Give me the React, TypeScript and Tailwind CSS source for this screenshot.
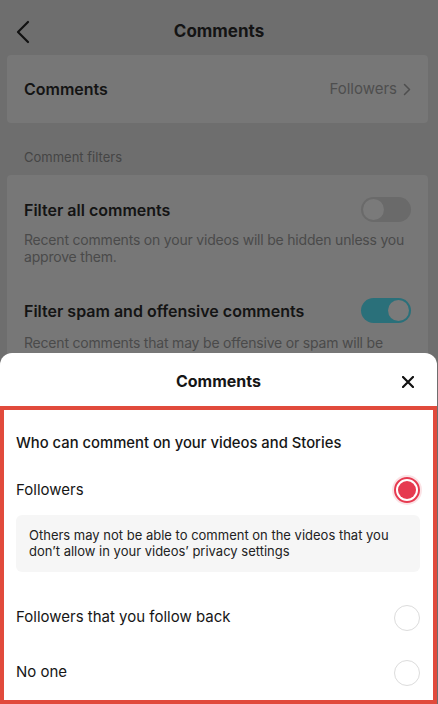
import React, { useState } from 'react';

const font = { fontFamily: 'Inter, "Liberation Sans", sans-serif' };

const Toggle: React.FC<{ on: boolean }> = ({ on }) => (
  <div
    className={`w-[50px] h-[25px] rounded-full p-[2px] flex items-center shrink-0 ${
      on ? 'bg-[#2a707a] justify-end' : 'bg-[#6a6a6a] justify-start'
    }`}
  >
    <div className="w-[21px] h-[21px] rounded-full bg-[#7a7a7a]" />
  </div>
);

const Radio: React.FC<{ checked: boolean }> = ({ checked }) =>
  checked ? (
    <div className="w-[26px] h-[26px] rounded-full border-2 border-[#e63a50] p-[2px] shadow-[0_0_0_2px_rgba(230,58,80,0.15)]">
      <div className="w-full h-full rounded-full bg-[#e63a50]" />
    </div>
  ) : (
    <div className="w-[26px] h-[26px] rounded-full border-[1.5px] border-[#dcdcdc]" />
  );

const App: React.FC = () => {
  const [choice, setChoice] = useState('followers');

  return (
    <div className="relative w-[438px] h-[704px] overflow-hidden bg-[#6e6e6e]" style={font}>
      {/* Dimmed settings page */}
      <div className="flex flex-col">
        <div className="relative h-[55px] flex justify-center pt-[20px]">
          <svg className="absolute left-[15px] top-[20px]" width="16" height="24" viewBox="0 0 16 24" fill="none">
            <path d="M13 2L3 12l10 10" stroke="#111" strokeWidth="2.2" strokeLinecap="round" strokeLinejoin="round" />
          </svg>
          <span className="text-[17px] leading-[22px] font-bold text-[#141414]">Comments</span>
        </div>

        <div className="ml-[7px] mr-[10px] h-[68px] rounded-[4px] bg-[#777777] flex items-center justify-between pl-[17px] pr-[17px]">
          <span className="text-[16px] font-semibold text-[#141414]">Comments</span>
          <div className="flex items-center gap-[6px] text-[#4e4e4e]">
            <span className="text-[15px]">Followers</span>
            <svg width="8" height="13" viewBox="0 0 8 13" fill="none">
              <path d="M1.5 1.5l5 5-5 5" stroke="#4e4e4e" strokeWidth="1.5" strokeLinecap="round" strokeLinejoin="round" />
            </svg>
          </div>
        </div>

        <div className="pl-[24px] pt-[25px] pb-[9px] text-[13px] leading-[18px] text-[#454545]">Comment filters</div>

        <div className="ml-[7px] mr-[10px] rounded-[4px] bg-[#777777] pl-[17px] pr-[12px] pt-[22px] pb-[20px]">
          <div className="flex items-center justify-between h-[25px] pr-[5px]">
            <span className="text-[16px] font-semibold text-[#141414]">Filter all comments</span>
            <Toggle on={false} />
          </div>
          <p className="mt-[9px] text-[14px] leading-[17px] tracking-[-0.2px] text-[#4a4a4a]">
            Recent comments on your videos will be hidden unless you approve them.
          </p>
          <div className="mt-[33px] flex items-center justify-between h-[25px] pr-[5px]">
            <span className="text-[16px] font-semibold text-[#141414]">Filter spam and offensive comments</span>
            <Toggle on={true} />
          </div>
          <p className="mt-[11px] text-[14px] leading-[17px] tracking-[-0.2px] text-[#4a4a4a]">
            Recent comments that may be offensive or spam will be hidden.
          </p>
        </div>
      </div>

      {/* Bottom sheet */}
      <div className="absolute left-0 top-[353px] w-[437px] h-[351px] bg-white rounded-t-[12px] flex flex-col">
        <div className="relative h-[53px] flex items-center justify-center shrink-0">
          <span className="text-[16px] font-bold text-[#161616] mt-[2px]">Comments</span>
          <svg className="absolute right-[23px] top-[23px]" width="12" height="12" viewBox="0 0 12 12" fill="none">
            <path d="M1 1l10 10M11 1L1 11" stroke="#111" strokeWidth="2.2" strokeLinecap="round" />
          </svg>
        </div>

        <div className="flex-1 border-4 border-[#e14a3c] pl-[12px] pr-[13px] pt-[23px] overflow-hidden">
          <div className="text-[14.8px] leading-[20px] font-medium text-[#161616]">
            Who can comment on your videos and Stories
          </div>

          <button
            onClick={() => setChoice('followers')}
            className="mt-[17px] w-full h-[40px] flex items-center justify-between"
          >
            <span className="text-[15px] text-[#161616]">Followers</span>
            <Radio checked={choice === 'followers'} />
          </button>

          <div className="mt-[5px] rounded-[6px] bg-[#f6f6f6] pl-[13px] pr-[10px] pt-[12px] pb-[13px] text-[13px] leading-[16px] text-[#222]">
            Others may not be able to comment on the videos that you don’t allow in your videos’ privacy settings
          </div>

          <button
            onClick={() => setChoice('mutual')}
            className="mt-[18px] w-full h-[55px] flex items-center justify-between"
          >
            <span className="text-[15px] text-[#161616]">Followers that you follow back</span>
            <Radio checked={choice === 'mutual'} />
          </button>

          <button
            onClick={() => setChoice('none')}
            className="w-full h-[55px] flex items-center justify-between"
          >
            <span className="text-[15px] text-[#161616]">No one</span>
            <Radio checked={choice === 'none'} />
          </button>
        </div>
      </div>
    </div>
  );
};

export default App;
